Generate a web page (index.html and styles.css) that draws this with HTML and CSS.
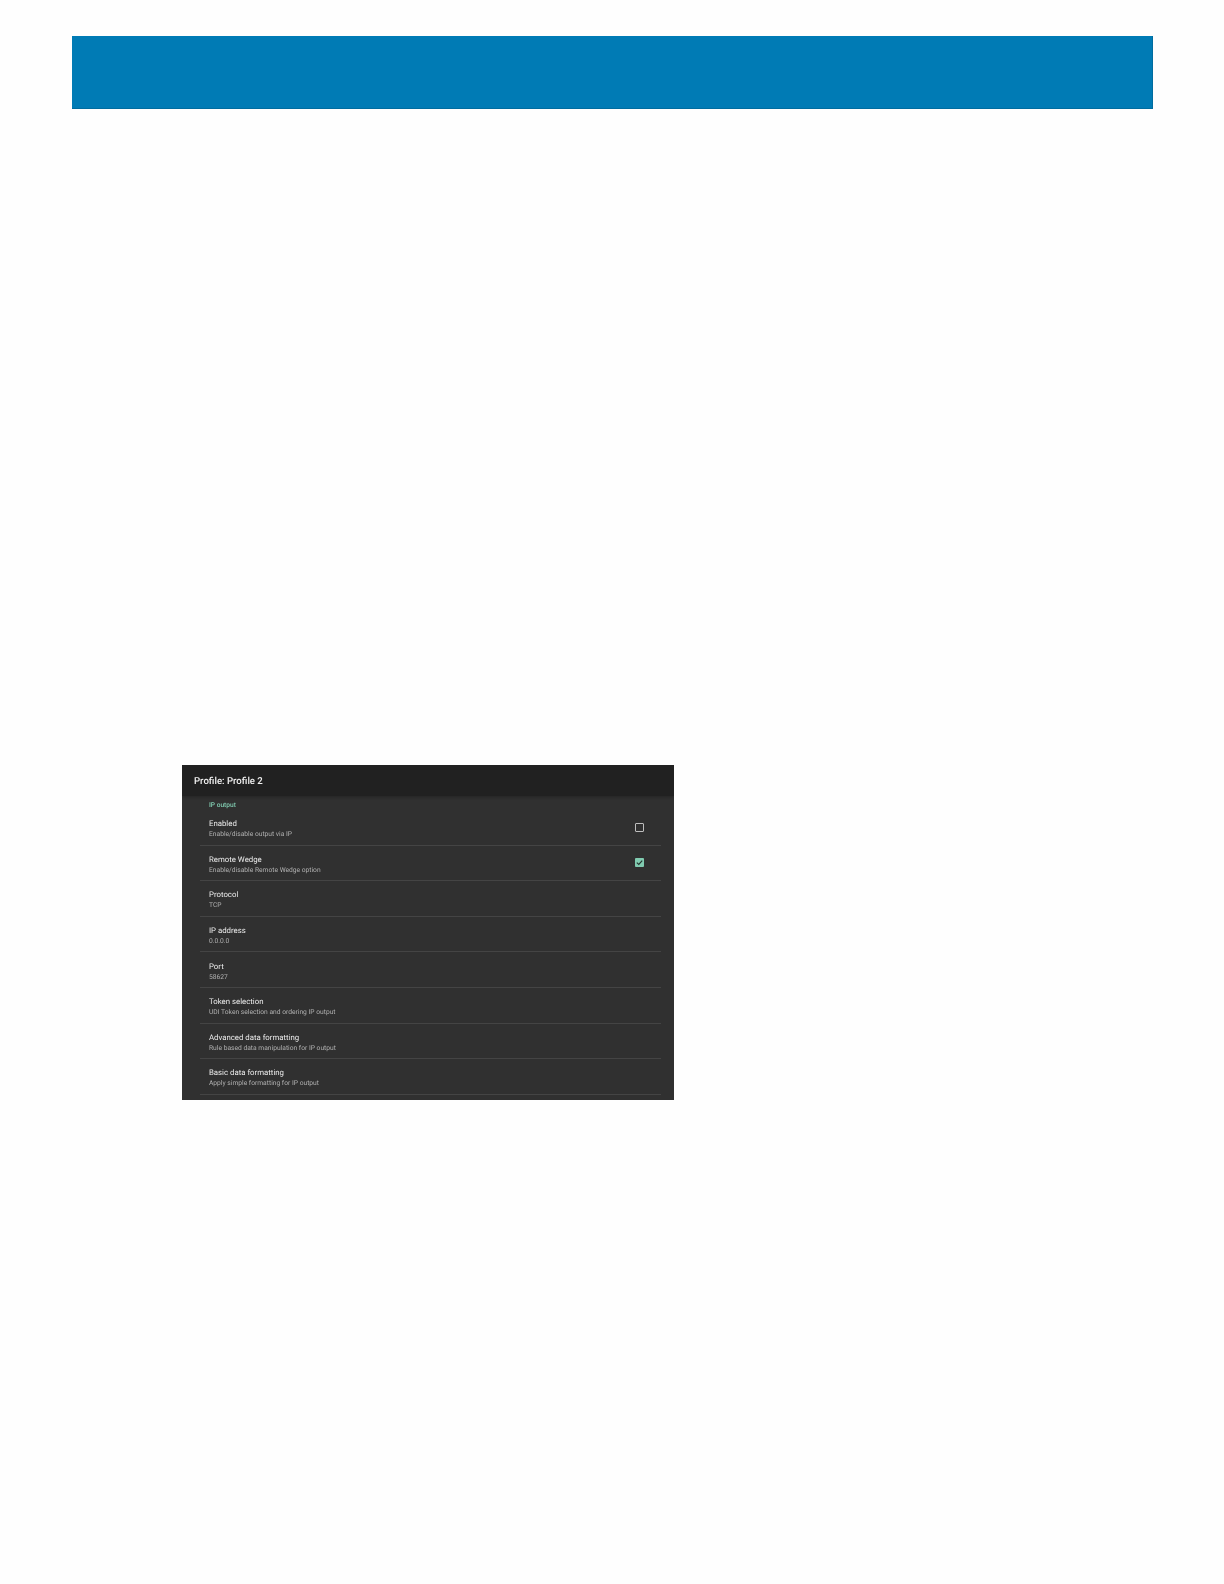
FILE: index.html

```html
<!DOCTYPE html>
<html lang="en">
<head>
    <meta charset="UTF-8">
    <title>Profile: Profile 2</title>
    <link rel="stylesheet" href="styles.css">
</head>
<body>
  <div class="banner"></div>

  <div class="shot">
    <div class="toolbar">Profile: Profile 2</div>
    <div class="list">
      <div class="section">IP output</div>

      <div class="row">
        <div>
          <div class="title">Enabled</div>
          <div class="sub">Enable/disable output via IP</div>
        </div>
        <span class="check"></span>
      </div>
      <div class="row">
        <div>
          <div class="title">Remote Wedge</div>
          <div class="sub">Enable/disable Remote Wedge option</div>
        </div>
        <span class="check on">
          <svg viewBox="0 0 10 10" width="9" height="9"><path d="M2 5.2 L4.2 7.2 L8 2.8" fill="none" stroke="#24332e" stroke-width="1.3"/></svg>
        </span>
      </div>
      <div class="row">
        <div>
          <div class="title">Protocol</div>
          <div class="sub">TCP</div>
        </div>
      </div>
      <div class="row">
        <div>
          <div class="title">IP address</div>
          <div class="sub">0.0.0.0</div>
        </div>
      </div>
      <div class="row">
        <div>
          <div class="title">Port</div>
          <div class="sub">58627</div>
        </div>
      </div>
      <div class="row">
        <div>
          <div class="title">Token selection</div>
          <div class="sub">UDI Token selection and ordering IP output</div>
        </div>
      </div>
      <div class="row">
        <div>
          <div class="title">Advanced data formatting</div>
          <div class="sub">Rule based data manipulation for IP output</div>
        </div>
      </div>
      <div class="row">
        <div>
          <div class="title">Basic data formatting</div>
          <div class="sub">Apply simple formatting for IP output</div>
        </div>
      </div>
    </div>
  </div>
</body>
</html>
```

FILE: styles.css

```css
body {
    margin: 0;
    padding: 36px 71px 0 72px;
    background-color: #fefefe;
    font-family: Roboto, sans-serif;
    text-rendering: geometricPrecision;
}
.banner {
    box-sizing: border-box;
    height: 73px;
    background-color: #007bb5;
    border-right: 1px solid #006c9f;
    border-bottom: 1px solid #006c9f;
}
.shot {
    margin: 656px 0 0 110px;
    width: 492px;
    height: 335px;
    overflow: hidden;
    background-color: #303030;
    filter: blur(0.3px);
}
.toolbar {
    height: 29px;
    padding: 2px 0 0 12px;
    line-height: 29px;
    font-size: 9.6px;
    font-weight: 500;
    color: #f2f2f2;
    background-color: #212121;
    box-shadow: 0 1px 3px rgba(0, 0, 0, 0.25);
}
.list {
    margin: 0 13px 0 18px;
}
.section {
    height: 10px;
    padding: 4px 0 0 9px;
    line-height: 11px;
    font-size: 6.6px;
    font-weight: 500;
    color: #80cbb0;
}
.row {
    display: flex;
    justify-content: space-between;
    align-items: center;
    box-sizing: border-box;
    height: 35.6px;
    padding: 4px 17px 0 9px;
    border-bottom: 1px solid #444444;
}
.title {
    font-size: 7.8px;
    line-height: 10px;
    color: #ececec;
}
.sub {
    font-size: 6.7px;
    line-height: 10px;
    color: #b0b0b0;
}
.check {
    display: flex;
    align-items: center;
    justify-content: center;
    box-sizing: border-box;
    width: 9px;
    height: 9px;
    margin-bottom: 4px;
    border: 1px solid #bdbdbd;
    border-radius: 1px;
}
.check.on {
    border: none;
    background-color: #80cbb0;
}
```
